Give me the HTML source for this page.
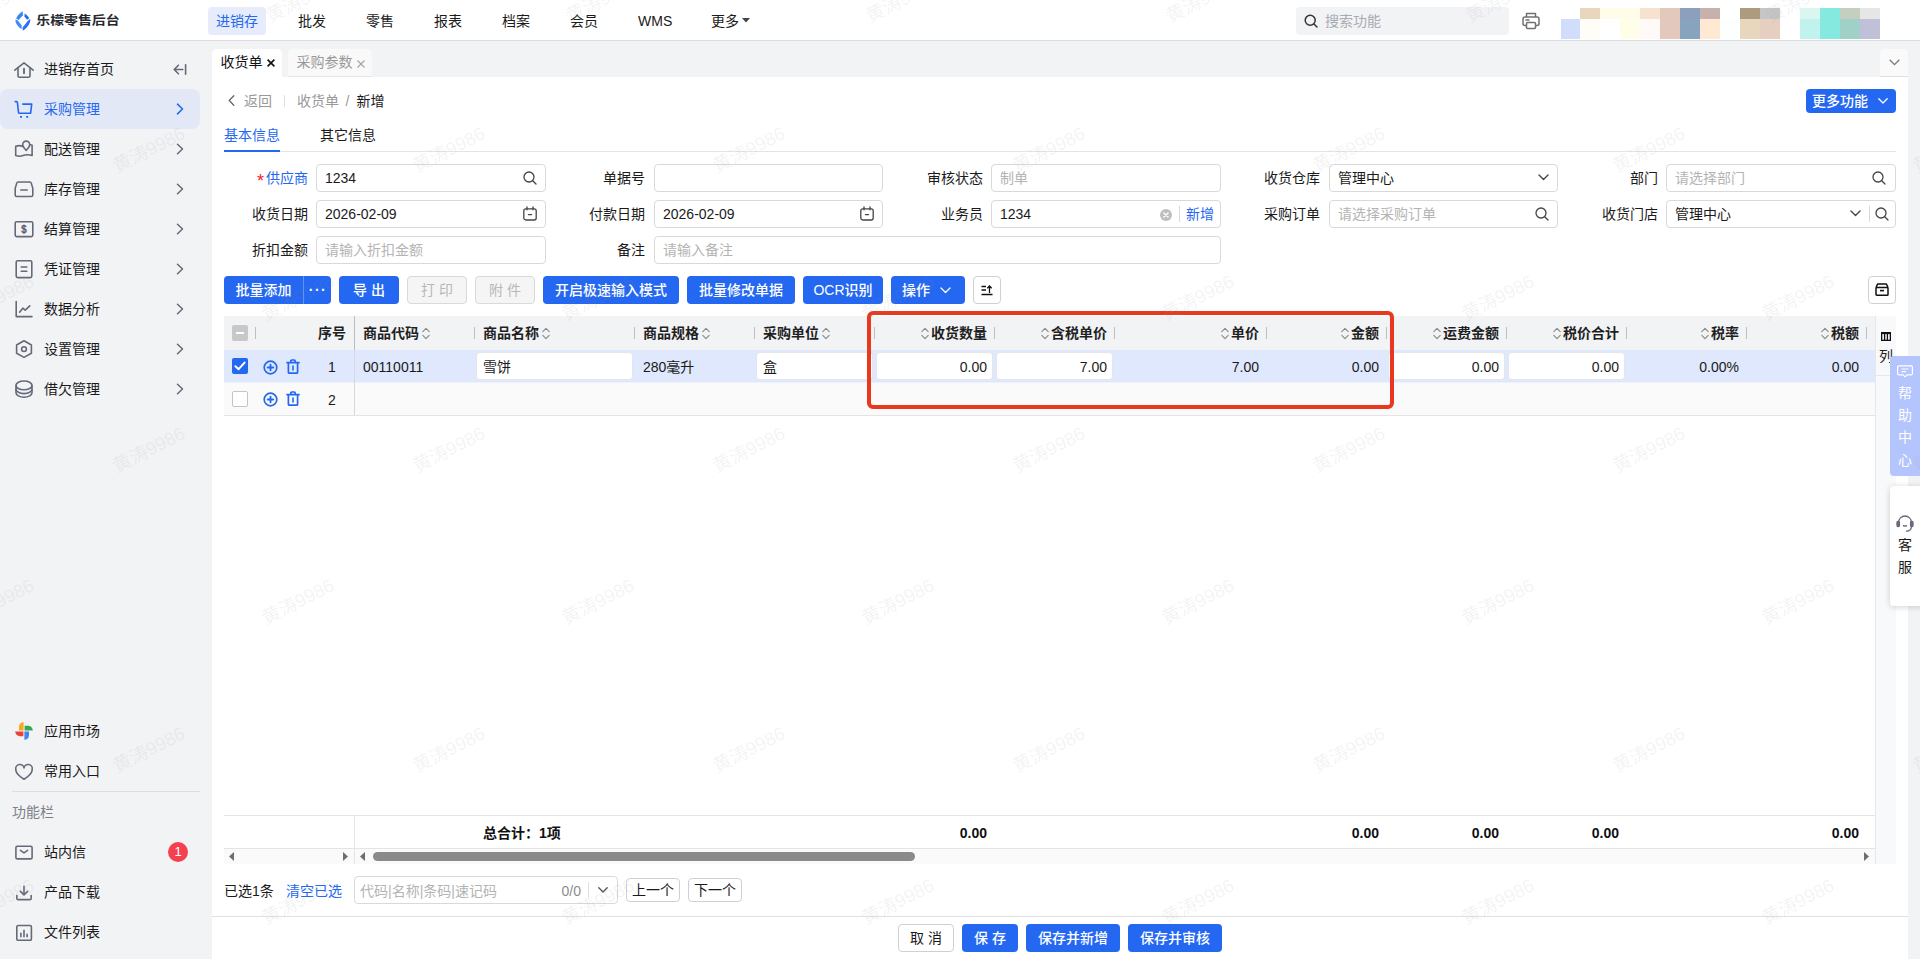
<!DOCTYPE html>
<html lang="zh-CN">
<head>
<meta charset="utf-8">
<title>乐檬零售后台</title>
<style>
*{box-sizing:border-box;margin:0;padding:0}
html,body{width:1920px;height:959px;overflow:hidden;background:#f2f3f5}
body{font-family:"Liberation Sans","Noto Sans CJK SC",sans-serif;font-size:14px;color:#1a1a1a;position:relative;line-height:20px}
.abs{position:absolute}
svg{display:block;overflow:visible}
/* header */
#hdr{position:absolute;left:0;top:0;width:1920px;height:41px;background:#fff;border-bottom:1px solid #dcdee2}
.logo-t{position:absolute;left:36.300px;top:11px;font-size:13.900px;font-weight:700;color:#26282e;letter-spacing:0;transform:scale(1,.88);transform-origin:0 50%;white-space:nowrap}
.nav{position:absolute;top:7px;height:28px;line-height:28px;padding:0 8px;border-radius:4px;color:#1a1a1a;font-size:14px;white-space:nowrap}
.nav.on{background:#e6ecfb;color:#2468f2}
#srch{position:absolute;left:1296px;top:7px;width:213px;height:28px;background:#f2f3f5;border-radius:4px}
#srch span{position:absolute;left:29px;top:0;line-height:28px;color:#a8abb2}
.mz{position:absolute;width:20px}
/* sidebar */
#side{position:absolute;left:0;top:41px;width:212px;height:918px;background:#f2f3f5}
.mi{position:absolute;left:0;width:200px;height:40px;line-height:40px;border-radius:8px}
.mi.on{background:#e3e8f7;color:#2468f2}
.mi .t{position:absolute;left:44px;top:0;font-size:14px;white-space:nowrap}
.mi .ic{position:absolute;left:14px;top:10px;width:20px;height:20px}
.mi .ar{position:absolute;left:176px;top:14px;width:8px;height:12px}
/* tabs */
.tab{position:absolute;top:49px;height:28px;line-height:27px;border-radius:4px 4px 0 0;white-space:nowrap}
/* main */
#main{position:absolute;left:212px;top:77px;width:1696px;height:882px;background:#fff}
/* content (page coords) */
#c{position:absolute;left:0;top:0;width:1920px;height:959px}
#c div,#c span{position:absolute;white-space:nowrap}
.lb{width:90px;text-align:right;line-height:28px;height:28px;color:#1a1a1a}
.ip{height:28px;border:1px solid #d9d9d9;border-radius:4px;background:#fff;line-height:26px;padding-left:8px;color:#1a1a1a}
.ph{color:#b4b4b4}
.btn{height:28px;line-height:28px;border-radius:4px;background:#2468f2;color:#fff;text-align:center;font-weight:500}
.btn.dis{background:#f5f5f5;border:1px solid #d9d9d9;color:#b8b8b8;line-height:26px;font-weight:400}
.btn.wh{background:#fff;border:1px solid #d0d0d0;color:#1a1a1a;line-height:26px;font-weight:400}
.th{top:316px;height:34px;line-height:34px;font-weight:700;color:#1f1f1f}
.th.r{text-align:right}
.sep{top:327px;width:1px;height:12px;background:#bfbfbf}
.td{top:350px;height:33px;line-height:34px;color:#1a1a1a}
.td.r{text-align:right}
.cell{top:353px;height:26px;background:#fff;border-radius:3px;box-shadow:0 0 0 1px #e4e6ea}
.sum{top:816px;height:32px;line-height:34px;font-weight:700;text-align:right;color:#111}
.so{display:inline-block;vertical-align:-2px;margin:0 2px 0 3px}
.th.r .so{margin:0 2px 0 0}
#wm{position:absolute;left:0;top:0;width:1920px;height:959px;overflow:hidden;pointer-events:none}
#wm span{position:absolute;width:120px;height:28px;line-height:28px;text-align:center;font-size:18.500px;color:rgba(140,145,150,.11);transform:rotate(-27deg);white-space:nowrap}
</style>
</head>
<body>
<!-- HEADER -->
<div id="hdr">
  <svg class="abs" style="left:14.700px;top:10.900px" width="15.600" height="20" viewBox="0 0 15.600 20">
    <path d="M7.700.300C4.400 2.200 1.900 5 1.200 7.700l2.500 1.200 4.200-4.700z" fill="#3b86f7"/>
    <path d="M9.600 2.400c2 1.200 3.800 3 4.700 4.800L12 8.800 9.500 5.600z" fill="#2468f2"/>
    <path d="M.400 8.600C.100 12.200 3 16 6.600 18.200l.100-3.600-3.800-5z" fill="#3b8bff"/>
    <path d="M15.300 8.100c.400 4.200-3.300 9.300-7.600 11.700l.100-3.600 5.300-6.600z" fill="#2a70f5"/>
  </svg>
  <div class="logo-t">乐檬零售后台</div>
  <div class="nav on" style="left:208px">进销存</div>
  <div class="nav" style="left:290px">批发</div>
  <div class="nav" style="left:358px">零售</div>
  <div class="nav" style="left:426px">报表</div>
  <div class="nav" style="left:494px">档案</div>
  <div class="nav" style="left:562px">会员</div>
  <div class="nav" style="left:630px">WMS</div>
  <div class="nav" style="left:703px">更多</div>
  <svg class="abs" style="left:742px;top:18px" width="8" height="5" viewBox="0 0 8 5"><path d="M0 0h8L4 4.5z" fill="#444"/></svg>
  <div id="srch">
    <svg class="abs" style="left:8px;top:7px" width="14" height="14" viewBox="0 0 14 14" fill="none" stroke="#333" stroke-width="1.5"><circle cx="6.2" cy="6.2" r="5"/><path d="M10 10l3 3" stroke-linecap="round"/></svg>
    <span>搜索功能</span>
  </div>
  <svg class="abs" style="left:1522px;top:12px" width="18" height="18" viewBox="0 0 18 18" fill="none" stroke="#707070" stroke-width="1.500" stroke-linejoin="round"><path d="M4.500 5V1.500h9V5"/><rect x="1" y="5" width="16" height="8.5" rx="2"/><rect x="4.5" y="10.5" width="9" height="6" rx="1" fill="#fff"/><path d="M4 8h3" stroke-linecap="round"/></svg>
  <!-- mosaic -->
  <div id="mosaic">
    <div class="mz" style="left:1580px;top:8px;height:11px;background:#e8d6bf"></div>
    <div class="mz" style="left:1600px;top:8px;height:11px;width:40px;background:#fffde9"></div>
    <div class="mz" style="left:1640px;top:8px;height:11px;background:#f6e2cf"></div>
    <div class="mz" style="left:1660px;top:8px;height:11px;background:#e3c9bd"></div>
    <div class="mz" style="left:1680px;top:8px;height:11px;background:#8e9fbe"></div>
    <div class="mz" style="left:1700px;top:8px;height:11px;background:#c6b1ad"></div>
    <div class="mz" style="left:1740px;top:8px;height:11px;background:#ad9b80"></div>
    <div class="mz" style="left:1760px;top:8px;height:11px;background:#c6c6c6"></div>
    <div class="mz" style="left:1800px;top:8px;height:11px;background:#d9f6f1"></div>
    <div class="mz" style="left:1820px;top:8px;height:11px;background:#85e9df"></div>
    <div class="mz" style="left:1840px;top:8px;height:11px;background:#c4cfc0"></div>
    <div class="mz" style="left:1860px;top:8px;height:11px;background:#e6e6e6"></div>
    <div class="mz" style="left:1561px;top:19px;height:20px;width:19px;background:#d0defb"></div>
    <div class="mz" style="left:1580px;top:19px;height:20px;background:#fffef6"></div>
    <div class="mz" style="left:1620px;top:19px;height:20px;background:#fffee9"></div>
    <div class="mz" style="left:1640px;top:19px;height:20px;background:#fffaf8"></div>
    <div class="mz" style="left:1660px;top:19px;height:20px;background:#e3c9bd"></div>
    <div class="mz" style="left:1680px;top:19px;height:20px;background:#87a3bd"></div>
    <div class="mz" style="left:1700px;top:19px;height:20px;background:#ffe9d2"></div>
    <div class="mz" style="left:1720px;top:19px;height:20px;background:#fbfffe"></div>
    <div class="mz" style="left:1740px;top:19px;height:20px;background:#e8d6bd"></div>
    <div class="mz" style="left:1760px;top:19px;height:20px;background:#e6cec1"></div>
    <div class="mz" style="left:1800px;top:19px;height:20px;background:#c0f3ed"></div>
    <div class="mz" style="left:1820px;top:19px;height:20px;background:#85e9df"></div>
    <div class="mz" style="left:1840px;top:19px;height:20px;background:#9fd1c8"></div>
    <div class="mz" style="left:1860px;top:19px;height:20px;background:#c0c1d9"></div>
  </div>
</div>

<!-- SIDEBAR -->
<div id="side">
<div class="mi" style="top:8px"><svg class="ic" viewBox="0 0 20 20" fill="none" stroke="#666978" stroke-width="1.6" stroke-linecap="round" stroke-linejoin="round"><path d="M.800 11.200L10 3.900l9.200 7.300"/><path d="M4 9v7.800a1.400 1.400 0 0 0 1.400 1.400h9.200a1.400 1.400 0 0 0 1.400-1.400V9"/><path d="M10 9.800v4.400" stroke-width="1.900"/></svg><span class="t">进销存首页</span>
  <svg class="abs" style="left:173px;top:14.500px" width="14" height="11" viewBox="0 0 14 11" fill="none" stroke="#666978" stroke-width="1.600" stroke-linecap="round" stroke-linejoin="round"><path d="M1.200 5.500h8.600M5.400 1.200L1.200 5.500l4.200 4.300M12.600.800v9.400"/></svg></div>
<div class="mi on" style="top:48px"><svg class="ic" viewBox="0 0 20 20" fill="none" stroke="#2468f2" stroke-width="1.6" stroke-linecap="round" stroke-linejoin="round"><path d="M1.200 2.600h1.300a.9.9 0 0 1 .9.800l1.100 10a1 1 0 0 0 1 .9h11.100l1.100-9.200H8.800"/><path d="M6 17.900h2M12.200 17.900h2" stroke-width="1.800" stroke-linecap="butt"/></svg><span class="t">采购管理</span><svg class="ar" viewBox="0 0 8 12" fill="none" stroke="#2468f2" stroke-width="1.6" stroke-linecap="round" stroke-linejoin="round"><path d="M1.5 1.2L6.5 6l-5 4.8"/></svg></div>
<div class="mi" style="top:88px"><svg class="ic" viewBox="0 0 20 20" fill="none" stroke="#666978" stroke-width="1.6" stroke-linecap="round" stroke-linejoin="round"><path d="M8.400 7.300C6.600 6.400 4.400 6.400 1.700 7.300v9.200c2.900 1 5 .9 7.200.1s5.300-1.200 9.200-.1V6.200l-1.800-.5"/><path d="M12.200 2.100a3.500 3.500 0 0 1 3.500 3.500c0 2.400-3.500 5.800-3.500 5.800S8.700 8 8.700 5.600a3.500 3.500 0 0 1 3.500-3.500z"/></svg><span class="t">配送管理</span><svg class="ar" viewBox="0 0 8 12" fill="none" stroke="#666978" stroke-width="1.5" stroke-linecap="round" stroke-linejoin="round"><path d="M1.5 1.2L6.5 6l-5 4.800"/></svg></div>
<div class="mi" style="top:128px"><svg class="ic" viewBox="0 0 20 20" fill="none" stroke="#666978" stroke-width="1.6" stroke-linecap="round" stroke-linejoin="round"><path d="M4.200 3h11.600a1.500 1.500 0 0 1 1.450 1.100L18.800 9.400V16a1.500 1.500 0 0 1-1.500 1.500H2.700A1.500 1.500 0 0 1 1.200 16V9.400L2.750 4.100A1.500 1.500 0 0 1 4.200 3z"/><path d="M6.800 11h6.400"/></svg><span class="t">库存管理</span><svg class="ar" viewBox="0 0 8 12" fill="none" stroke="#666978" stroke-width="1.5" stroke-linecap="round" stroke-linejoin="round"><path d="M1.500 1.200L6.500 6l-5 4.800"/></svg></div>
<div class="mi" style="top:168px"><svg class="ic" viewBox="0 0 20 20" fill="none" stroke="#666978" stroke-width="1.6" stroke-linejoin="round"><rect x="1.2" y="2.8" width="17.600" height="14.800" rx="1.500"/><text x="10" y="13.900" text-anchor="middle" font-family="Liberation Sans,sans-serif" font-size="10.500" font-weight="700" fill="#5a5c6b" stroke="none">$</text><path d="M10 5.400v9.600" stroke-width="1.100"/></svg><span class="t">结算管理</span><svg class="ar" viewBox="0 0 8 12" fill="none" stroke="#666978" stroke-width="1.5" stroke-linecap="round" stroke-linejoin="round"><path d="M1.500 1.200L6.500 6l-5 4.800"/></svg></div>
<div class="mi" style="top:208px"><svg class="ic" viewBox="0 0 20 20" fill="none" stroke="#666978" stroke-width="1.6" stroke-linecap="round" stroke-linejoin="round"><rect x="2.200" y="1.800" width="15.600" height="16.800" rx="1.500"/><path d="M7.200 8h5.600M7.200 12.200h5.600"/></svg><span class="t">凭证管理</span><svg class="ar" viewBox="0 0 8 12" fill="none" stroke="#666978" stroke-width="1.5" stroke-linecap="round" stroke-linejoin="round"><path d="M1.500 1.200L6.500 6l-5 4.800"/></svg></div>
<div class="mi" style="top:248px"><svg class="ic" viewBox="0 0 20 20" fill="none" stroke="#666978" stroke-width="1.6" stroke-linecap="round" stroke-linejoin="round"><path d="M2.200 2.500V17.600H18"/><path d="M5.600 13.200l3.200-4 2.400 2 4.600-4.400"/></svg><span class="t">数据分析</span><svg class="ar" viewBox="0 0 8 12" fill="none" stroke="#666978" stroke-width="1.5" stroke-linecap="round" stroke-linejoin="round"><path d="M1.500 1.200L6.500 6l-5 4.800"/></svg></div>
<div class="mi" style="top:288px"><svg class="ic" viewBox="0 0 20 20" fill="none" stroke="#666978" stroke-width="1.600" stroke-linecap="round" stroke-linejoin="round"><path d="M10 1.800l7.400 4.200v8.200L10 18.400l-7.400-4.200V6z"/><circle cx="10" cy="10.100" r="2.400"/></svg><span class="t">设置管理</span><svg class="ar" viewBox="0 0 8 12" fill="none" stroke="#666978" stroke-width="1.500" stroke-linecap="round" stroke-linejoin="round"><path d="M1.500 1.200L6.500 6l-5 4.800"/></svg></div>
<div class="mi" style="top:328px"><svg class="ic" viewBox="0 0 20 20" fill="none" stroke="#666978" stroke-width="1.600" stroke-linecap="round" stroke-linejoin="round"><ellipse cx="10" cy="6.400" rx="8" ry="4.400"/><path d="M2 6.400v7.400c0 2.400 3.600 4.400 8 4.400s8-2 8-4.400V6.400"/><path d="M2 10.200c0 2.400 3.600 4.400 8 4.400s8-2 8-4.400"/></svg><span class="t">借欠管理</span><svg class="ar" viewBox="0 0 8 12" fill="none" stroke="#666978" stroke-width="1.500" stroke-linecap="round" stroke-linejoin="round"><path d="M1.500 1.200L6.500 6l-5 4.800"/></svg></div>
<div class="mi" style="top:670px"><svg class="ic" viewBox="0 0 20 20"><path d="M9.600 1.200a4.600 4.600 0 0 0-4.600 4.600v3.600h4.600z" fill="#f9a825"/><path d="M18.800 9.400a4.600 4.600 0 0 0-4.600-4.600h-3.600v4.600z" fill="#34a853"/><path d="M10.400 18.800a4.600 4.600 0 0 0 4.600-4.600v-3.600h-4.600z" fill="#4285f4"/><path d="M1.200 10.600a4.600 4.600 0 0 0 4.600 4.600h3.600v-4.600z" fill="#ea4335"/></svg><span class="t">应用市场</span></div>
<div class="mi" style="top:710px"><svg class="ic" viewBox="0 0 20 20" fill="none" stroke="#666978" stroke-width="1.600" stroke-linejoin="round"><path d="M10 18.200S1.800 13.600 1.800 8.400A4.100 4.100 0 0 1 10 6.900a4.100 4.100 0 0 1 8.200 1.500c0 5.200-8.200 9.800-8.200 9.800z"/></svg><span class="t">常用入口</span></div>
<div class="abs" style="left:12px;top:750px;width:188px;height:1px;background:#dcdde1"></div>
<div class="abs" style="left:12px;top:761px;line-height:20px;color:#7d7f88;font-size:14px">功能栏</div>
<div class="mi" style="top:791px"><svg class="ic" viewBox="0 0 20 20" fill="none" stroke="#666978" stroke-width="1.600" stroke-linecap="round" stroke-linejoin="round"><rect x="1.900" y="4.300" width="16.200" height="12.600" rx="1.400"/><path d="M6.400 8.400l3.600 2.500 3.600-2.500"/></svg><span class="t">站内信</span><span class="abs" style="left:168px;top:10px;width:20px;height:20px;border-radius:10px;background:#f5414f;color:#fff;font-size:13px;line-height:20px;text-align:center">1</span></div>
<div class="mi" style="top:831px"><svg class="ic" viewBox="0 0 20 20" fill="none" stroke="#666978" stroke-width="1.600" stroke-linecap="round" stroke-linejoin="round"><path d="M10 4.200v8.600M6.400 9.400l3.600 3.500 3.600-3.500"/><path d="M2.800 13.600v2.600a1.400 1.400 0 0 0 1.400 1.400h11.600a1.400 1.400 0 0 0 1.400-1.400v-2.600"/></svg><span class="t">产品下载</span></div>
<div class="mi" style="top:871px"><svg class="ic" viewBox="0 0 20 20" fill="none" stroke="#666978" stroke-width="1.600" stroke-linecap="round" stroke-linejoin="round"><rect x="2.800" y="3.500" width="14.600" height="14.800" rx="1.400"/><path d="M6.900 11.200v3.600M10 8.400v6.400M13.100 12.200v2.600"/></svg><span class="t">文件列表</span></div>

</div>

<!-- TABS -->
<div class="tab" style="left:212px;width:70px;background:#fff;color:#111;border-radius:5px 5px 0 0"><span class="abs" style="left:8.500px;top:0">收货单</span>
  <svg class="abs" style="left:55px;top:10px" width="8" height="8" viewBox="0 0 8 8" stroke="#111" stroke-width="1.600"><path d="M.600.600l6.800 6.800M7.400.600L.600 7.400"/></svg></div>
<div class="tab" style="left:288px;width:84px;background:#f9f9fa;color:#999;border-bottom:1px solid #e4e5e8;border-radius:5px 5px 0 0"><span class="abs" style="left:8.500px;top:0">采购参数</span>
  <svg class="abs" style="left:69px;top:10.500px" width="8" height="8" viewBox="0 0 8 8" stroke="#a6a6a6" stroke-width="1.200"><path d="M.500.500l7 7M7.500.500l-7 7"/></svg></div>
<div class="tab" style="left:1880px;width:28px;background:#fafafa;border-bottom:1px solid #dedfe2;border-radius:5px 5px 0 0">
  <svg class="abs" style="left:9px;top:10px" width="11" height="7" viewBox="0 0 11 7" fill="none" stroke="#777" stroke-width="1.300"><path d="M.700.800l4.800 4.800L10.300.800"/></svg>
</div>

<!-- MAIN -->
<div id="main">

</div>

<div id="c">
  <!-- breadcrumb -->
  <svg class="abs" style="left:228px;top:95px" width="7" height="11" viewBox="0 0 7 11" fill="none" stroke="#666" stroke-width="1.3" stroke-linecap="round" stroke-linejoin="round"><path d="M5.800.800L1.200 5.500l4.600 4.700"/></svg>
  <span style="left:244px;top:90.500px;color:#999">返回</span>
  <div style="left:284px;top:95px;width:1px;height:12px;background:#e0e0e0"></div>
  <span style="left:297px;top:90.500px;color:#999">收货单</span>
  <span style="left:345.500px;top:90.500px;color:#999">/</span>
  <span style="left:356.500px;top:90.500px;color:#1a1a1a">新增</span>
  <div class="btn" style="left:1806px;top:89px;width:90px;height:24px;line-height:24px;text-align:left;padding-left:6px;border-radius:4px">更多功能</div>
  <svg class="abs" style="left:1878px;top:98px" width="10" height="6" viewBox="0 0 10 6" fill="none" stroke="#fff" stroke-width="1.300" stroke-linecap="round" stroke-linejoin="round"><path d="M.800.800L5 5l4.200-4.200"/></svg>
  <!-- sub tabs -->
  <span style="left:224px;top:125px;color:#2468f2">基本信息</span>
  <span style="left:320px;top:125px;color:#1a1a1a">其它信息</span>
  <div style="left:224px;top:151px;width:1672px;height:1px;background:#e4e4e4"></div>
  <div style="left:224px;top:150px;width:56px;height:2px;background:#2468f2"></div>

  <!-- form row 1 -->
  <div class="lb" style="left:218px;top:164px;color:#2468f2"><span style="position:relative;top:4px;margin-right:2px;color:#f5222d;font-size:18px;line-height:10px">*</span>供应商</div>
  <div class="ip" style="left:316px;top:164px;width:230px">1234</div>
  <svg class="abs" style="left:523px;top:171px" width="14" height="14" viewBox="0 0 14 14" fill="none" stroke="#444" stroke-width="1.300"><circle cx="6" cy="6" r="5"/><path d="M9.700 9.700l3.300 3.300" stroke-linecap="round"/></svg>
  <div class="lb" style="left:555px;top:164px">单据号</div>
  <div class="ip" style="left:654px;top:164px;width:229px"></div>
  <div class="lb" style="left:893px;top:164px">审核状态</div>
  <div class="ip ph" style="left:991px;top:164px;width:230px">制单</div>
  <div class="lb" style="left:1230px;top:164px">收货仓库</div>
  <div class="ip" style="left:1329px;top:164px;width:229px">管理中心</div>
  <svg class="abs" style="left:1538px;top:174px" width="11" height="7" viewBox="0 0 11 7" fill="none" stroke="#444" stroke-width="1.400" stroke-linecap="round" stroke-linejoin="round"><path d="M1 1l4.500 4.500L10 1"/></svg>
  <div class="lb" style="left:1568px;top:164px">部门</div>
  <div class="ip ph" style="left:1666px;top:164px;width:230px">请选择部门</div>
  <svg class="abs" style="left:1872px;top:171px" width="14" height="14" viewBox="0 0 14 14" fill="none" stroke="#444" stroke-width="1.300"><circle cx="6" cy="6" r="5"/><path d="M9.700 9.700l3.300 3.300" stroke-linecap="round"/></svg>

  <!-- form row 2 -->
  <div class="lb" style="left:218px;top:200px">收货日期</div>
  <div class="ip" style="left:316px;top:200px;width:230px">2026-02-09</div>
  <svg class="abs" style="left:523px;top:206px" width="14" height="15" viewBox="0 0 14 15" fill="none" stroke="#444" stroke-width="1.300" stroke-linecap="round"><rect x=".800" y="2.800" width="12.400" height="11.200" rx="2"/><path d="M4 .800v3M10 .800v3M5.400 8.600h3.200"/></svg>
  <div class="lb" style="left:555px;top:200px">付款日期</div>
  <div class="ip" style="left:654px;top:200px;width:229px">2026-02-09</div>
  <svg class="abs" style="left:860px;top:206px" width="14" height="15" viewBox="0 0 14 15" fill="none" stroke="#444" stroke-width="1.300" stroke-linecap="round"><rect x=".800" y="2.800" width="12.400" height="11.200" rx="2"/><path d="M4 .800v3M10 .800v3M5.400 8.600h3.200"/></svg>
  <div class="lb" style="left:893px;top:200px">业务员</div>
  <div class="ip" style="left:991px;top:200px;width:230px">1234</div>
  <svg class="abs" style="left:1160px;top:209px" width="12" height="12" viewBox="0 0 12 12"><circle cx="6" cy="6" r="6" fill="#bfbfbf"/><path d="M3.900 3.900l4.200 4.200M8.100 3.900L3.900 8.100" stroke="#fff" stroke-width="1.400" stroke-linecap="round"/></svg>
  <div style="left:1179px;top:206px;width:1px;height:16px;background:#d9d9d9"></div>
  <span style="left:1186px;top:204px;color:#2468f2">新增</span>
  <div class="lb" style="left:1230px;top:200px">采购订单</div>
  <div class="ip ph" style="left:1329px;top:200px;width:229px">请选择采购订单</div>
  <svg class="abs" style="left:1535px;top:207px" width="14" height="14" viewBox="0 0 14 14" fill="none" stroke="#444" stroke-width="1.300"><circle cx="6" cy="6" r="5"/><path d="M9.700 9.700l3.300 3.300" stroke-linecap="round"/></svg>
  <div class="lb" style="left:1568px;top:200px">收货门店</div>
  <div class="ip" style="left:1666px;top:200px;width:230px">管理中心</div>
  <svg class="abs" style="left:1850px;top:210px" width="11" height="7" viewBox="0 0 11 7" fill="none" stroke="#444" stroke-width="1.400" stroke-linecap="round" stroke-linejoin="round"><path d="M1 1l4.500 4.500L10 1"/></svg>
  <div style="left:1869px;top:206px;width:1px;height:16px;background:#d9d9d9"></div>
  <svg class="abs" style="left:1875px;top:207px" width="14" height="14" viewBox="0 0 14 14" fill="none" stroke="#444" stroke-width="1.300"><circle cx="6" cy="6" r="5"/><path d="M9.700 9.700l3.300 3.300" stroke-linecap="round"/></svg>

  <!-- form row 3 -->
  <div class="lb" style="left:218px;top:236px">折扣金额</div>
  <div class="ip ph" style="left:316px;top:236px;width:230px">请输入折扣金额</div>
  <div class="lb" style="left:555px;top:236px">备注</div>
  <div class="ip ph" style="left:654px;top:236px;width:567px">请输入备注</div>

  <!-- toolbar -->
  <div class="btn" style="left:224px;top:276px;width:79px;border-radius:4px 0 0 4px">批量添加</div>
  <div class="btn" style="left:303px;top:276px;width:28px;border-radius:0 4px 4px 0;border-left:1px solid #5f92f7;letter-spacing:1.500px;font-weight:700;line-height:28px;padding-left:1px">···</div>
  <div class="btn" style="left:339px;top:276px;width:60px">导 出</div>
  <div class="btn dis" style="left:407px;top:276px;width:60px">打 印</div>
  <div class="btn dis" style="left:475px;top:276px;width:60px">附 件</div>
  <div class="btn" style="left:543px;top:276px;width:136px">开启极速输入模式</div>
  <div class="btn" style="left:687px;top:276px;width:108px">批量修改单据</div>
  <div class="btn" style="left:803px;top:276px;width:80px">OCR识别</div>
  <div class="btn" style="left:891px;top:276px;width:74px;text-align:left;padding-left:11px">操作</div>
  <svg class="abs" style="left:940px;top:287px" width="11" height="7" viewBox="0 0 11 7" fill="none" stroke="#fff" stroke-width="1.300" stroke-linecap="round" stroke-linejoin="round"><path d="M1 1l4.500 4.500L10 1"/></svg>
  <div class="btn wh" style="left:973px;top:276px;width:28px"></div>
  <svg class="abs" style="left:981px;top:285px" width="12" height="11" viewBox="0 0 12 11" fill="none" stroke="#111" stroke-width="1.300"><path d="M.500 1.500h4.500M.500 5h4.500M.500 9.500h11M8.500 8V1M6.300 3.200L8.500 1l2.200 2.200"/></svg>
  <div class="btn wh" style="left:1868px;top:276px;width:28px"></div>
  <svg class="abs" style="left:1875px;top:283px" width="14" height="13" viewBox="0 0 14 13" fill="none" stroke="#111" stroke-width="1.500" stroke-linejoin="round"><path d="M1 4.500L2.600 1h8.800L13 4.500"/><rect x="1" y="4.500" width="12" height="7.700" rx=".800"/><path d="M5 7.600h4" stroke-width="1.600"/></svg>
  <!-- table -->
  <div style="left:224px;top:316px;width:1651px;height:34px;background:#f2f3f5"></div>
  <div style="left:224px;top:350px;width:1651px;height:33px;background:#dfe8fc"></div>
  <div style="left:224px;top:383px;width:1651px;height:32px;background:#fafafa"></div>
  <div style="left:224px;top:382px;width:1651px;height:1px;background:#eef2fb"></div>
  <div style="left:224px;top:415px;width:1651px;height:1px;background:#e4e4e4"></div>
  <div style="left:1875px;top:316px;width:21px;height:548px;background:#f8f9fb;border-left:1px solid #e6e7ea"></div>
  <div style="left:1876px;top:375px;width:20px;height:1px;background:#e6e7ea"></div>
  <svg class="abs" style="left:1881px;top:332px" width="10" height="9" viewBox="0 0 10 9" fill="none" stroke="#111" stroke-width="1.300"><rect x=".650" y=".650" width="8.700" height="7.700"/><path d="M3.600.650v7.700M6.400.650v7.700"/><path d="M.650 1.200h8.700" stroke-width="1.800"/></svg>
  <span style="left:1879px;top:346px;color:#1a1a1a">列</span>
  <div style="left:354px;top:316px;width:1px;height:34px;background:#bdbdbd"></div>
  <div style="left:354px;top:350px;width:1px;height:65px;background:#d5d9e2"></div>
  <div style="left:232px;top:325px;width:16px;height:16px;background:#c8c8c8;border-radius:2px"></div>
  <div style="left:236px;top:332px;width:8px;height:2px;background:#fff"></div>
  <div class="sep" style="left:255px"></div>
  <div class="th r" style="left:300px;width:46px">序号</div>
  <div class="th" style="left:363px">商品代码<svg class="so" width="8" height="13" viewBox="0 0 8 13" fill="none" stroke="#8a8a8a" stroke-width="1.100" stroke-linecap="round" stroke-linejoin="round"><path d="M.800 4.700L4 1.300l3.200 3.400M.800 8.300L4 11.700l3.200-3.400"/></svg></div>
  <div class="sep" style="left:474px"></div>
  <div class="th" style="left:483px">商品名称<svg class="so" width="8" height="13" viewBox="0 0 8 13" fill="none" stroke="#8a8a8a" stroke-width="1.100" stroke-linecap="round" stroke-linejoin="round"><path d="M.800 4.700L4 1.300l3.200 3.400M.800 8.300L4 11.700l3.200-3.400"/></svg></div>
  <div class="sep" style="left:634px"></div>
  <div class="th" style="left:643px">商品规格<svg class="so" width="8" height="13" viewBox="0 0 8 13" fill="none" stroke="#8a8a8a" stroke-width="1.100" stroke-linecap="round" stroke-linejoin="round"><path d="M.800 4.700L4 1.300l3.200 3.400M.800 8.300L4 11.700l3.200-3.400"/></svg></div>
  <div class="sep" style="left:754px"></div>
  <div class="th" style="left:763px">采购单位<svg class="so" width="8" height="13" viewBox="0 0 8 13" fill="none" stroke="#8a8a8a" stroke-width="1.100" stroke-linecap="round" stroke-linejoin="round"><path d="M.800 4.700L4 1.300l3.200 3.400M.800 8.300L4 11.700l3.200-3.400"/></svg></div>
  <div class="sep" style="left:874px"></div>
  <div class="th r" style="left:874px;width:113px"><svg class="so" width="8" height="13" viewBox="0 0 8 13" fill="none" stroke="#8a8a8a" stroke-width="1.100" stroke-linecap="round" stroke-linejoin="round"><path d="M.800 4.700L4 1.300l3.200 3.400M.800 8.300L4 11.700l3.200-3.400"/></svg>收货数量</div>
  <div class="sep" style="left:994px"></div>
  <div class="th r" style="left:994px;width:113px"><svg class="so" width="8" height="13" viewBox="0 0 8 13" fill="none" stroke="#8a8a8a" stroke-width="1.100" stroke-linecap="round" stroke-linejoin="round"><path d="M.800 4.700L4 1.300l3.200 3.400M.800 8.300L4 11.700l3.200-3.400"/></svg>含税单价</div>
  <div class="sep" style="left:1114px"></div>
  <div class="th r" style="left:1114px;width:145px"><svg class="so" width="8" height="13" viewBox="0 0 8 13" fill="none" stroke="#8a8a8a" stroke-width="1.100" stroke-linecap="round" stroke-linejoin="round"><path d="M.800 4.700L4 1.300l3.200 3.400M.800 8.300L4 11.700l3.200-3.400"/></svg>单价</div>
  <div class="sep" style="left:1266px"></div>
  <div class="th r" style="left:1266px;width:113px"><svg class="so" width="8" height="13" viewBox="0 0 8 13" fill="none" stroke="#8a8a8a" stroke-width="1.100" stroke-linecap="round" stroke-linejoin="round"><path d="M.800 4.700L4 1.300l3.200 3.400M.800 8.300L4 11.700l3.200-3.400"/></svg>金额</div>
  <div class="sep" style="left:1386px"></div>
  <div class="th r" style="left:1386px;width:113px"><svg class="so" width="8" height="13" viewBox="0 0 8 13" fill="none" stroke="#8a8a8a" stroke-width="1.100" stroke-linecap="round" stroke-linejoin="round"><path d="M.800 4.700L4 1.300l3.200 3.400M.800 8.300L4 11.700l3.200-3.400"/></svg>运费金额</div>
  <div class="sep" style="left:1506px"></div>
  <div class="th r" style="left:1506px;width:113px"><svg class="so" width="8" height="13" viewBox="0 0 8 13" fill="none" stroke="#8a8a8a" stroke-width="1.100" stroke-linecap="round" stroke-linejoin="round"><path d="M.800 4.700L4 1.300l3.200 3.400M.800 8.300L4 11.700l3.200-3.400"/></svg>税价合计</div>
  <div class="sep" style="left:1626px"></div>
  <div class="th r" style="left:1626px;width:113px"><svg class="so" width="8" height="13" viewBox="0 0 8 13" fill="none" stroke="#8a8a8a" stroke-width="1.100" stroke-linecap="round" stroke-linejoin="round"><path d="M.800 4.700L4 1.300l3.200 3.400M.800 8.300L4 11.700l3.200-3.400"/></svg>税率</div>
  <div class="sep" style="left:1746px"></div>
  <div class="th r" style="left:1746px;width:113px"><svg class="so" width="8" height="13" viewBox="0 0 8 13" fill="none" stroke="#8a8a8a" stroke-width="1.100" stroke-linecap="round" stroke-linejoin="round"><path d="M.800 4.700L4 1.300l3.200 3.400M.800 8.300L4 11.700l3.200-3.400"/></svg>税额</div>
  <div class="sep" style="left:1866px"></div>
  <div style="left:232px;top:358px;width:16px;height:16px;background:#2468f2;border-radius:2px"></div>
  <svg class="abs" style="left:234px;top:361px" width="12" height="10" viewBox="0 0 12 10" fill="none" stroke="#fff" stroke-width="2" stroke-linecap="round" stroke-linejoin="round"><path d="M1.400 5.200l3.200 3L10.600 1.600"/></svg>
  <svg class="abs" style="left:263px;top:360px" width="15" height="15" viewBox="0 0 15 15" fill="none" stroke="#2468f2" stroke-width="1.700" stroke-linecap="round"><circle cx="7.500" cy="7.500" r="6.300"/><path d="M4.700 7.500h5.600M7.500 4.700v5.600" stroke-width="1.900"/></svg>
  <svg class="abs" style="left:286px;top:359px" width="14" height="15" viewBox="0 0 14 15" fill="none" stroke="#2468f2" stroke-width="1.700" stroke-linecap="round" stroke-linejoin="round"><path d="M1 3.600h12M4.800 3.400V2a1 1 0 0 1 1-1h2.400a1 1 0 0 1 1 1v1.400"/><path d="M2.400 3.800v9.400a1 1 0 0 0 1 1h7.200a1 1 0 0 0 1-1V3.800"/><path d="M7 7v4" stroke-width="1.600"/></svg>
  <div class="td" style="left:322px;width:20px;text-align:center">1</div>
  <div class="td" style="left:363px">00110011</div>
  <div class="cell" style="left:477px;width:155px"></div><div class="td" style="left:483px">雪饼</div>
  <div class="td" style="left:643px">280毫升</div>
  <div class="cell" style="left:757px;width:115px"></div><div class="td" style="left:763px">盒</div>
  <div class="cell" style="left:877px;width:115px"></div><div class="td r" style="left:874px;width:113px">0.00</div>
  <div class="cell" style="left:997px;width:115px"></div><div class="td r" style="left:994px;width:113px">7.00</div>
  <div class="td r" style="left:1114px;width:145px">7.00</div>
  <div class="td r" style="left:1266px;width:113px">0.00</div>
  <div class="cell" style="left:1389px;width:115px"></div><div class="td r" style="left:1386px;width:113px">0.00</div>
  <div class="cell" style="left:1509px;width:115px"></div><div class="td r" style="left:1506px;width:113px">0.00</div>
  <div class="td r" style="left:1626px;width:113px">0.00%</div>
  <div class="td r" style="left:1746px;width:113px">0.00</div>
  <div style="left:232px;top:391px;width:16px;height:16px;background:#fff;border:1px solid #c4c4c4;border-radius:2px"></div>
  <svg class="abs" style="left:263px;top:392px" width="15" height="15" viewBox="0 0 15 15" fill="none" stroke="#2468f2" stroke-width="1.700" stroke-linecap="round"><circle cx="7.500" cy="7.500" r="6.300"/><path d="M4.700 7.500h5.600M7.500 4.700v5.600" stroke-width="1.900"/></svg>
  <svg class="abs" style="left:286px;top:391px" width="14" height="15" viewBox="0 0 14 15" fill="none" stroke="#2468f2" stroke-width="1.700" stroke-linecap="round" stroke-linejoin="round"><path d="M1 3.600h12M4.800 3.400V2a1 1 0 0 1 1-1h2.400a1 1 0 0 1 1 1v1.400"/><path d="M2.400 3.800v9.400a1 1 0 0 0 1 1h7.200a1 1 0 0 0 1-1V3.800"/><path d="M7 7v4" stroke-width="1.600"/></svg>
  <div class="td" style="left:322px;top:383px;width:20px;text-align:center">2</div>
  <div style="left:867px;top:311px;width:527px;height:98px;border:4px solid #e8391f;border-radius:6px"></div>
  <!-- summary + scroll -->
  <div style="left:224px;top:815px;width:1651px;height:1px;background:#e4e4e4"></div>
  <div style="left:224px;top:848px;width:1651px;height:1px;background:#e4e4e4"></div>
  <div style="left:224px;top:849px;width:1651px;height:15px;background:#fafafa"></div>
  <div style="left:354px;top:816px;width:1px;height:48px;background:#e4e4e4"></div>
  <div class="sum" style="left:483px;text-align:left">总合计：1项</div>
  <div class="sum" style="left:874px;width:113px">0.00</div>
  <div class="sum" style="left:1266px;width:113px">0.00</div>
  <div class="sum" style="left:1386px;width:113px">0.00</div>
  <div class="sum" style="left:1506px;width:113px">0.00</div>
  <div class="sum" style="left:1746px;width:113px">0.00</div>
  <svg class="abs" style="left:229px;top:852px" width="5" height="9" viewBox="0 0 5 9"><path d="M5 0v9L0 4.500z" fill="#6e6e6e"/></svg>
  <svg class="abs" style="left:343px;top:852px" width="5" height="9" viewBox="0 0 5 9"><path d="M0 0v9l5-4.500z" fill="#6e6e6e"/></svg>
  <svg class="abs" style="left:360px;top:852px" width="5" height="9" viewBox="0 0 5 9"><path d="M5 0v9L0 4.500z" fill="#6e6e6e"/></svg>
  <svg class="abs" style="left:1864px;top:852px" width="5" height="9" viewBox="0 0 5 9"><path d="M0 0v9l5-4.500z" fill="#6e6e6e"/></svg>
  <div style="left:373px;top:852px;width:542px;height:9px;border-radius:5px;background:#8a8a8a"></div>
  <span style="left:224px;top:881px;color:#1a1a1a">已选1条</span>
  <span style="left:286px;top:881px;color:#2468f2">清空已选</span>
  <div class="ip ph" style="left:354px;top:876px;width:264px;padding-left:5px;line-height:28px">代码|名称|条码|速记码</div>
  <span style="left:561.500px;top:881px;color:#8c8c8c">0/0</span>
  <div style="left:588px;top:882px;width:1px;height:16px;background:#e0e0e0"></div>
  <svg class="abs" style="left:598px;top:887px" width="10" height="6" viewBox="0 0 10 6" fill="none" stroke="#595959" stroke-width="1.400" stroke-linecap="round" stroke-linejoin="round"><path d="M.800.800L5 5l4.200-4.200"/></svg>
  <div class="btn wh" style="left:626px;top:878px;width:54px;height:24px;line-height:23px">上一个</div>
  <div class="btn wh" style="left:688px;top:878px;width:54px;height:24px;line-height:23px">下一个</div>
  <div style="left:212px;top:916px;width:1696px;height:1px;background:#e0e0e0"></div>
  <div class="btn wh" style="left:898px;top:924px;width:56px">取 消</div>
  <div class="btn" style="left:962px;top:924px;width:56px">保 存</div>
  <div class="btn" style="left:1026px;top:924px;width:94px">保存并新增</div>
  <div class="btn" style="left:1128px;top:924px;width:94px">保存并审核</div>
</div>

<!-- floaters -->
<div class="abs" style="left:1890px;top:356px;width:30px;height:120px;background:#b4c4fc;border-radius:4px 0 0 4px"></div>
<svg class="abs" style="left:1897px;top:365px" width="16" height="13" viewBox="0 0 16 13" fill="none" stroke="#fff" stroke-width="1.200" stroke-linejoin="round"><path d="M1.600.800h12.800a1 1 0 0 1 1 1v7a1 1 0 0 1-1 1H10l-2 2-2-2H1.600a1 1 0 0 1-1-1v-7a1 1 0 0 1 1-1z"/><path d="M4.500 4h7M4.500 6.600h4.500"/></svg>
<div class="abs" style="left:1898px;top:382px;width:14px;line-height:22.200px;color:#fff;font-size:14px;text-align:center">帮<br>助<br>中<br>心</div>
<div class="abs" style="left:1890px;top:486px;width:34px;height:120px;background:#fff;border-radius:4px;box-shadow:0 1px 6px rgba(0,0,0,.18)"></div>
<svg class="abs" style="left:1896px;top:515px" width="18" height="17" viewBox="0 0 18 17" fill="none" stroke="#666978" stroke-width="1.300" stroke-linecap="round"><path d="M2.600 7.400a6.400 6.400 0 0 1 12.800 0"/><rect x="1" y="6.400" width="2.400" height="5.200" rx="1" fill="#666978"/><rect x="14.600" y="6.400" width="2.400" height="5.200" rx="1" fill="#666978"/><path d="M15.400 11.400c0 3-2.400 4.600-5 4.800M7.400 10.600c1 .600 2.200.600 3.200 0"/></svg>
<div class="abs" style="left:1898px;top:534px;width:14px;line-height:22px;color:#1a1a1a;font-size:14px;text-align:center">客<br>服</div>
<!-- watermark overlay -->
<div id="wm">
<span style="left:-58px;top:-14px">黄涛9986</span>
<span style="left:242px;top:-14px">黄涛9986</span>
<span style="left:542px;top:-14px">黄涛9986</span>
<span style="left:842px;top:-14px">黄涛9986</span>
<span style="left:1142px;top:-14px">黄涛9986</span>
<span style="left:1442px;top:-14px">黄涛9986</span>
<span style="left:1742px;top:-14px">黄涛9986</span>
<span style="left:-62px;top:284px">黄涛9986</span>
<span style="left:238px;top:284px">黄涛9986</span>
<span style="left:538px;top:284px">黄涛9986</span>
<span style="left:838px;top:284px">黄涛9986</span>
<span style="left:1138px;top:284px">黄涛9986</span>
<span style="left:1438px;top:284px">黄涛9986</span>
<span style="left:1738px;top:284px">黄涛9986</span>
<span style="left:-62px;top:588px">黄涛9986</span>
<span style="left:238px;top:588px">黄涛9986</span>
<span style="left:538px;top:588px">黄涛9986</span>
<span style="left:838px;top:588px">黄涛9986</span>
<span style="left:1138px;top:588px">黄涛9986</span>
<span style="left:1438px;top:588px">黄涛9986</span>
<span style="left:1738px;top:588px">黄涛9986</span>
<span style="left:-62px;top:888px">黄涛9986</span>
<span style="left:238px;top:888px">黄涛9986</span>
<span style="left:538px;top:888px">黄涛9986</span>
<span style="left:838px;top:888px">黄涛9986</span>
<span style="left:1138px;top:888px">黄涛9986</span>
<span style="left:1438px;top:888px">黄涛9986</span>
<span style="left:1738px;top:888px">黄涛9986</span>
<span style="left:89px;top:136px">黄涛9986</span>
<span style="left:389px;top:136px">黄涛9986</span>
<span style="left:689px;top:136px">黄涛9986</span>
<span style="left:989px;top:136px">黄涛9986</span>
<span style="left:1289px;top:136px">黄涛9986</span>
<span style="left:1589px;top:136px">黄涛9986</span>
<span style="left:1889px;top:136px">黄涛9986</span>
<span style="left:89px;top:436px">黄涛9986</span>
<span style="left:389px;top:436px">黄涛9986</span>
<span style="left:689px;top:436px">黄涛9986</span>
<span style="left:989px;top:436px">黄涛9986</span>
<span style="left:1289px;top:436px">黄涛9986</span>
<span style="left:1589px;top:436px">黄涛9986</span>
<span style="left:1889px;top:436px">黄涛9986</span>
<span style="left:89px;top:736px">黄涛9986</span>
<span style="left:389px;top:736px">黄涛9986</span>
<span style="left:689px;top:736px">黄涛9986</span>
<span style="left:989px;top:736px">黄涛9986</span>
<span style="left:1289px;top:736px">黄涛9986</span>
<span style="left:1589px;top:736px">黄涛9986</span>
<span style="left:1889px;top:736px">黄涛9986</span>
</div>
</body>
</html>
